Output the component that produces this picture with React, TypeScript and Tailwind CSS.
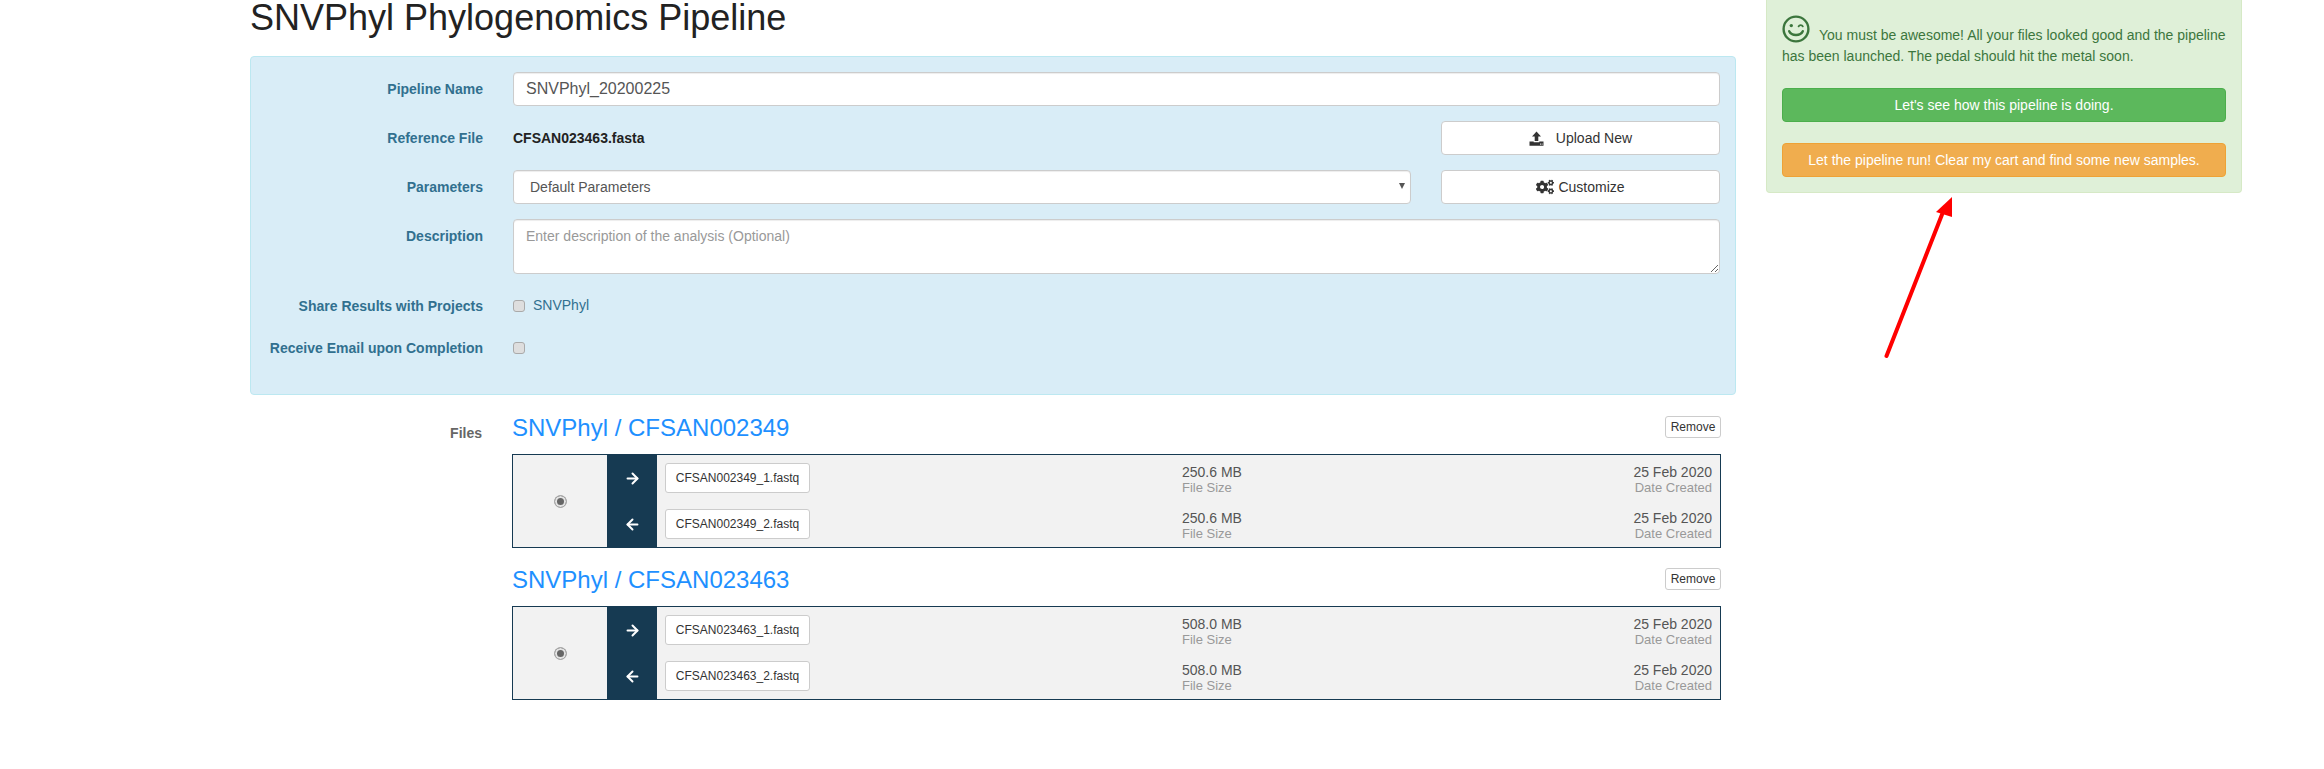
import { ArrowLeft, ArrowRight } from "lucide-react";
import { FaCogs } from "react-icons/fa";

const samples = [
  {
    name: "SNVPhyl / CFSAN002349",
    files: [
      { name: "CFSAN002349_1.fastq", size: "250.6 MB", dir: "forward" },
      { name: "CFSAN002349_2.fastq", size: "250.6 MB", dir: "reverse" },
    ],
  },
  {
    name: "SNVPhyl / CFSAN023463",
    files: [
      { name: "CFSAN023463_1.fastq", size: "508.0 MB", dir: "forward" },
      { name: "CFSAN023463_2.fastq", size: "508.0 MB", dir: "reverse" },
    ],
  },
];

const labelClass = "w-[232px] shrink-0 text-right text-[14px] leading-5 font-bold text-[#31708f]";
const fieldClass =
  "h-[34px] w-full rounded border border-[#ccc] bg-white px-3 text-[#555] shadow-[inset_0_1px_1px_rgba(0,0,0,0.075)]";
const buttonClass =
  "flex h-[34px] w-[279px] shrink-0 items-center justify-center rounded border border-[#ccc] bg-white text-[14px] text-[#333]";
const checkClass = "h-[12px] w-[12px] appearance-none rounded-[3px] border border-[#aaa] bg-[#dedede]";

const UploadIcon = () => (
  <svg width="15" height="15" viewBox="0 0 15 15" fill="#333" className="mr-3">
    <path d="M7.5 0.5 12 5.5H9.3V10H5.7V5.5H3Z" />
    <path d="M0.5 10.5H4.7V11.3H10.3V10.5H14.5V14.8H0.5Z" />
    <rect x="11" y="12.6" width="1" height="1" fill="#fff" />
    <rect x="12.6" y="12.6" width="1" height="1" fill="#fff" />
  </svg>
);

const WinkIcon = () => (
  <svg
    width="28"
    height="28"
    viewBox="0 0 28 28"
    fill="none"
    stroke="#3c763d"
    strokeWidth="2.4"
    className="mr-[9px] inline-block align-[-3px]"
  >
    <circle cx="14" cy="14" r="12.4" />
    <circle cx="9.3" cy="10.6" r="1.7" fill="#3c763d" stroke="none" />
    <path d="M16.6 11.4C17.4 9.6 20 9.6 20.8 11.4" strokeWidth="1.8" strokeLinecap="round" />
    <path d="M7.2 16.2C9.4 21.2 18.6 21.2 20.8 16.2" strokeLinecap="round" />
  </svg>
);

const App = () => {
  return (
    <div className="relative flex min-h-[769px] bg-white font-['Liberation_Sans',Arial,sans-serif]">
      <main className="ml-[250px] w-[1486px] shrink-0">
        <h1 className="h-[56px] text-[36px] leading-[36px] font-medium text-[#222]">
          SNVPhyl Phylogenomics Pipeline
        </h1>

        <form className="rounded border border-[#bce8f1] bg-[#d9edf7] pt-[15px] pr-[15px] pb-[30px]">
          <div className="mb-[15px] flex items-center gap-[30px]">
            <label className={labelClass}>Pipeline Name</label>
            <input className={`${fieldClass} text-[16px]`} defaultValue="SNVPhyl_20200225" />
          </div>

          <div className="mb-[15px] flex items-center gap-[30px]">
            <label className={labelClass}>Reference File</label>
            <p className="flex-1 text-[14px] leading-5 font-bold text-[#222]">CFSAN023463.fasta</p>
            <button type="button" className={buttonClass}>
              <UploadIcon />
              Upload New
            </button>
          </div>

          <div className="mb-[15px] flex items-center gap-[30px]">
            <label className={labelClass}>Parameters</label>
            <div className="relative flex-1">
              <select className={`${fieldClass} appearance-none pl-4 text-[14px]`}>
                <option>Default Parameters</option>
              </select>
              <span className="absolute top-[13px] right-[6px] h-0 w-0 border-x-[3px] border-t-[6px] border-x-transparent border-t-[#555]" />
            </div>
            <button type="button" className={buttonClass}>
              <FaCogs className="mr-1 text-[18px] text-[#333]" />
              Customize
            </button>
          </div>

          <div className="mb-[15px] flex items-start gap-[30px]">
            <label className={`${labelClass} pt-[7px]`}>Description</label>
            <textarea
              className="h-[55px] w-full rounded border border-[#ccc] bg-white px-3 py-[6px] text-[14px] leading-5 text-[#555] shadow-[inset_0_1px_1px_rgba(0,0,0,0.075)] placeholder:text-[#999]"
              placeholder="Enter description of the analysis (Optional)"
            />
          </div>

          <div className="mb-[9px] flex h-[33px] items-center gap-[30px]">
            <label className={labelClass}>Share Results with Projects</label>
            <div className="flex items-center gap-[8px] text-[14px] text-[#31708f]">
              <input type="checkbox" disabled className={checkClass} />
              SNVPhyl
            </div>
          </div>

          <div className="flex h-[33px] items-center gap-[30px]">
            <label className={labelClass}>Receive Email upon Completion</label>
            <input type="checkbox" disabled className={checkClass} />
          </div>
        </form>

        <section className="mt-[21px] flex">
          <h2 className="w-[232px] shrink-0 pt-[7px] text-right text-[14px] leading-5 font-bold text-[#666]">
            Files
          </h2>
          <div className="ml-[30px] w-[1209px] shrink-0">
            {samples.map((sample) => (
              <div key={sample.name} className="mb-5">
                <div className="flex h-[38px] items-start justify-between">
                  <a className="-mt-px text-[24px] leading-[26px] text-[#1e90ff]">{sample.name}</a>
                  <button
                    type="button"
                    className="h-[22px] w-[56px] rounded-[3px] border border-[#ccc] bg-white text-[12px] text-[#333]"
                  >
                    Remove
                  </button>
                </div>
                <div className="flex border border-[#163a52] bg-[#f2f2f2]">
                  <div className="flex w-[94px] shrink-0 items-center justify-center">
                    <input
                      type="radio"
                      checked
                      readOnly
                      disabled
                      className="h-[13px] w-[13px] appearance-none rounded-full border border-[#aaa] bg-[#666] shadow-[inset_0_0_0_2px_#e4e4e4]"
                    />
                  </div>
                  <div className="flex-1">
                    {sample.files.map((file) => (
                      <div key={file.name} className="flex h-[46px]">
                        <div className="flex w-[50px] shrink-0 items-center justify-center bg-[#163a52] text-white">
                          {file.dir === "forward" ? (
                            <ArrowRight size={17} strokeWidth={2.8} />
                          ) : (
                            <ArrowLeft size={17} strokeWidth={2.8} />
                          )}
                        </div>
                        <div className="w-[525px] shrink-0 pt-2 pl-2">
                          <button
                            type="button"
                            className="h-[30px] w-[145px] rounded-[3px] border border-[#ccc] bg-white text-[12px] text-[#333]"
                          >
                            {file.name}
                          </button>
                        </div>
                        <div className="flex-1 pt-[9px] leading-4">
                          <p className="text-[14px] text-[#555]">{file.size}</p>
                          <p className="text-[13px] text-[#999]">File Size</p>
                        </div>
                        <div className="pt-[9px] pr-2 text-right leading-4">
                          <p className="text-[14px] text-[#555]">25 Feb 2020</p>
                          <p className="text-[13px] text-[#999]">Date Created</p>
                        </div>
                      </div>
                    ))}
                  </div>
                </div>
              </div>
            ))}
          </div>
        </section>
      </main>

      <aside className="ml-[30px] w-[476px] shrink-0">
        <div className="rounded-b border border-t-0 border-[#d6e9c6] bg-[#dff0d8] px-[15px] pt-[15px] pb-[15px] text-[14px] text-[#3c763d]">
          <p className="mb-[21px] leading-[21px]">
            <WinkIcon />
            You must be awesome! All your files looked good and the pipeline has been launched. The pedal
            should hit the metal soon.
          </p>
          <button
            type="button"
            className="mb-[21px] block h-[34px] w-full rounded border border-[#4cae4c] bg-[#5cb85c] text-white"
          >
            Let's see how this pipeline is doing.
          </button>
          <button
            type="button"
            className="block h-[34px] w-full rounded border border-[#eea236] bg-[#f0ad4e] text-white"
          >
            Let the pipeline run! Clear my cart and find some new samples.
          </button>
        </div>
      </aside>

      {/* annotation arrow drawn over the screenshot */}
      <svg width="90" height="170" viewBox="0 0 90 170" className="absolute top-[192px] left-[1875px]">
        <path d="M11.5 164 68 20" stroke="#f00" strokeWidth="4" strokeLinecap="round" fill="none" />
        <path d="M77 5 61 20 77 25Z" fill="#f00" />
      </svg>
    </div>
  );
};

export default App;
